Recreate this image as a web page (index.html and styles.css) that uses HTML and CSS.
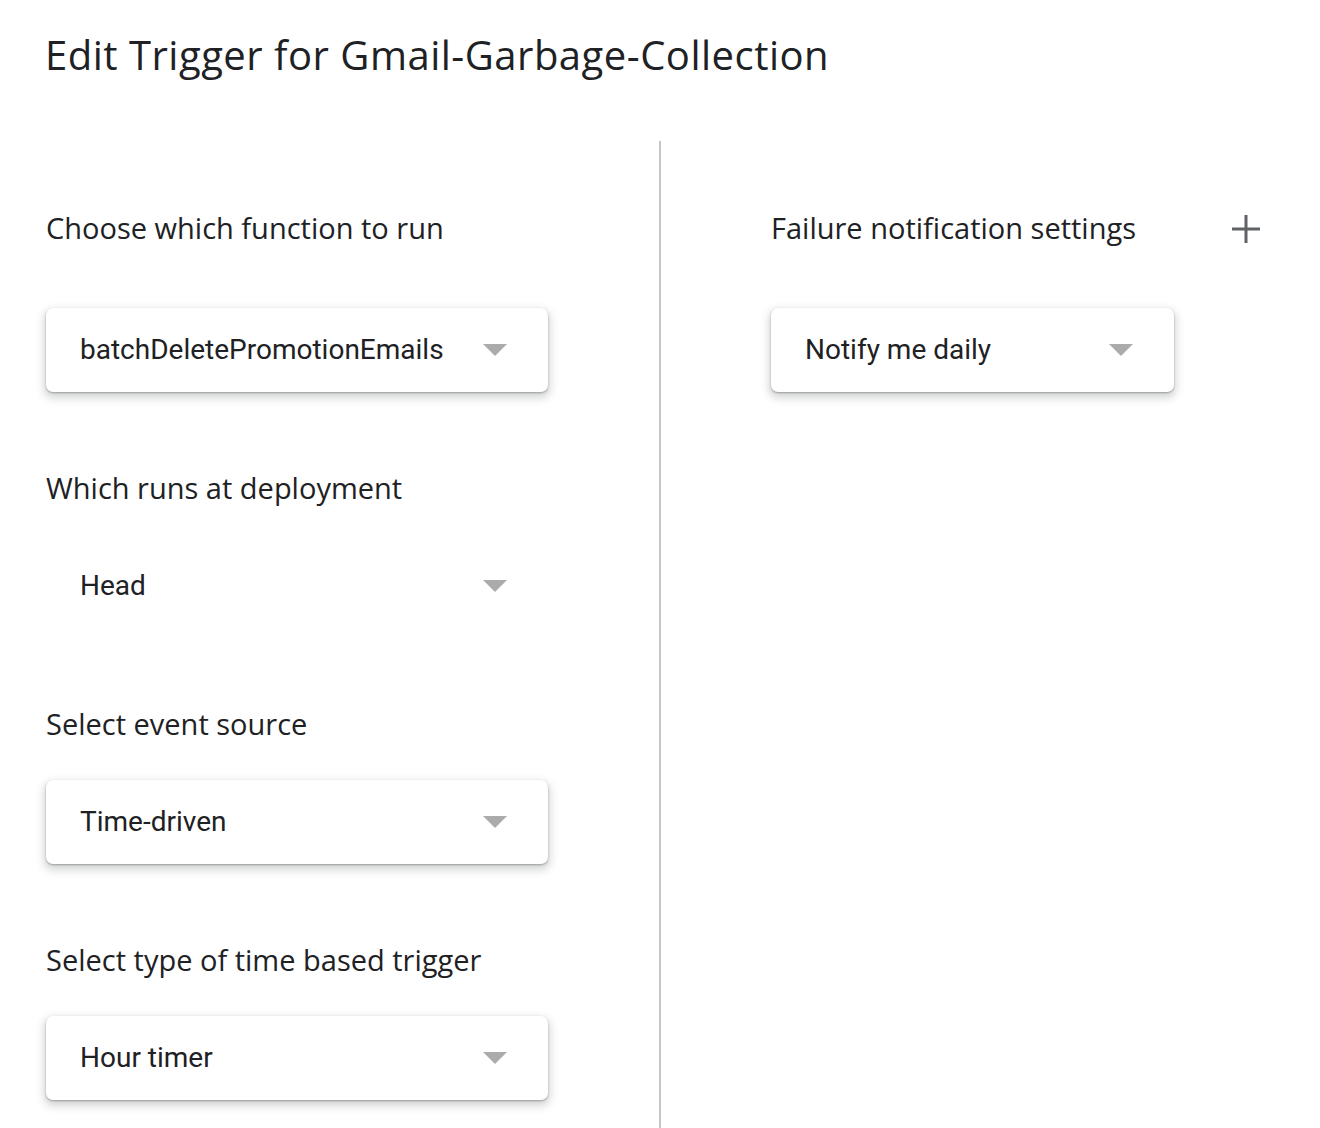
FILE: index.html
```html
<!DOCTYPE html>
<html lang="en">
<head>
<meta charset="utf-8">
<title>Edit Trigger</title>
<link rel="stylesheet" href="styles.css">
</head>
<body>
<div class="page">
  <h1 class="title">Edit Trigger for Gmail-Garbage-Collection</h1>
  <div class="columns">
    <div class="col-left">
      <div class="field first">
        <div class="label">Choose which function to run</div>
        <div class="select raised"><span class="value">batchDeletePromotionEmails</span><span class="arrow"></span></div>
      </div>
      <div class="field">
        <div class="label">Which runs at deployment</div>
        <div class="select flat"><span class="value">Head</span><span class="arrow"></span></div>
      </div>
      <div class="field">
        <div class="label">Select event source</div>
        <div class="select raised"><span class="value">Time-driven</span><span class="arrow"></span></div>
      </div>
      <div class="field">
        <div class="label">Select type of time based trigger</div>
        <div class="select raised"><span class="value">Hour timer</span><span class="arrow"></span></div>
      </div>
    </div>
    <div class="divider"></div>
    <div class="col-right">
      <div class="field first">
        <div class="label-row">
          <div class="label">Failure notification settings</div>
          <button class="add" aria-label="Add">
            <svg width="28" height="28" viewBox="0 0 28 28"><path d="M14 0v28M0 14h28" stroke="#5f6368" stroke-width="3" fill="none"/></svg>
          </button>
        </div>
        <div class="select raised narrow"><span class="value">Notify me daily</span><span class="arrow"></span></div>
      </div>
    </div>
  </div>
</div>
</body>
</html>
```
FILE: styles.css
```css
html, body {
  margin: 0;
  padding: 0;
  background: #ffffff;
}
.page {
  width: 1320px;
  height: 1128px;
  overflow: hidden;
  color: #202124;
}
.title {
  margin: 0;
  padding: 32px 0 0 45px;
  height: 107px;
  box-sizing: border-box;
  font-family: "Open Sans", "Noto Sans", sans-serif;
  font-weight: 500;
  font-size: 40px;
  line-height: 46px;
  color: #202124;
  letter-spacing: 0.5px;
}
.columns {
  display: flex;
  height: 1000px;
  margin-top: 34px;
}
.col-left {
  width: 659px;
  flex: none;
  padding: 68px 0 0 46px;
  box-sizing: border-box;
  display: flex;
  flex-direction: column;
  gap: 77px;
}
.divider {
  width: 2px;
  flex: none;
  background: #c4c7c9;
  align-self: stretch;
}
.col-right {
  flex: 1;
  padding: 68px 50px 0 110px;
  box-sizing: border-box;
}
.field {
  display: flex;
  flex-direction: column;
  gap: 35px;
}
.field.first {
  gap: 59px;
}
.label {
  font-family: "Open Sans", "Noto Sans", sans-serif;
  font-size: 29px;
  line-height: 38px;
  height: 38px;
  padding-bottom: 2px;
  color: #202124;
}
.label-row {
  display: flex;
  align-items: center;
  justify-content: space-between;
  height: 40px;
}
.add {
  width: 48px;
  height: 48px;
  border: 0;
  padding: 0;
  background: transparent;
  display: flex;
  align-items: center;
  justify-content: center;
}
.select {
  width: 502px;
  height: 84px;
  box-sizing: border-box;
  padding: 0 41px 2px 34px;
  display: flex;
  align-items: center;
  justify-content: space-between;
  border-radius: 7px;
  background: #ffffff;
}
.select.narrow {
  width: 403px;
}
.select.raised {
  box-shadow: 0 1px 2px rgba(60, 64, 67, 0.4), 0 4px 9px 2px rgba(60, 64, 67, 0.22);
}
.value {
  font-family: Roboto, "Liberation Sans", sans-serif;
  font-size: 28px;
  color: #202124;
}
.arrow {
  width: 0;
  height: 0;
  margin-top: 2px;
  border-left: 12px solid transparent;
  border-right: 12px solid transparent;
  border-top: 12px solid #ababab;
}
```
